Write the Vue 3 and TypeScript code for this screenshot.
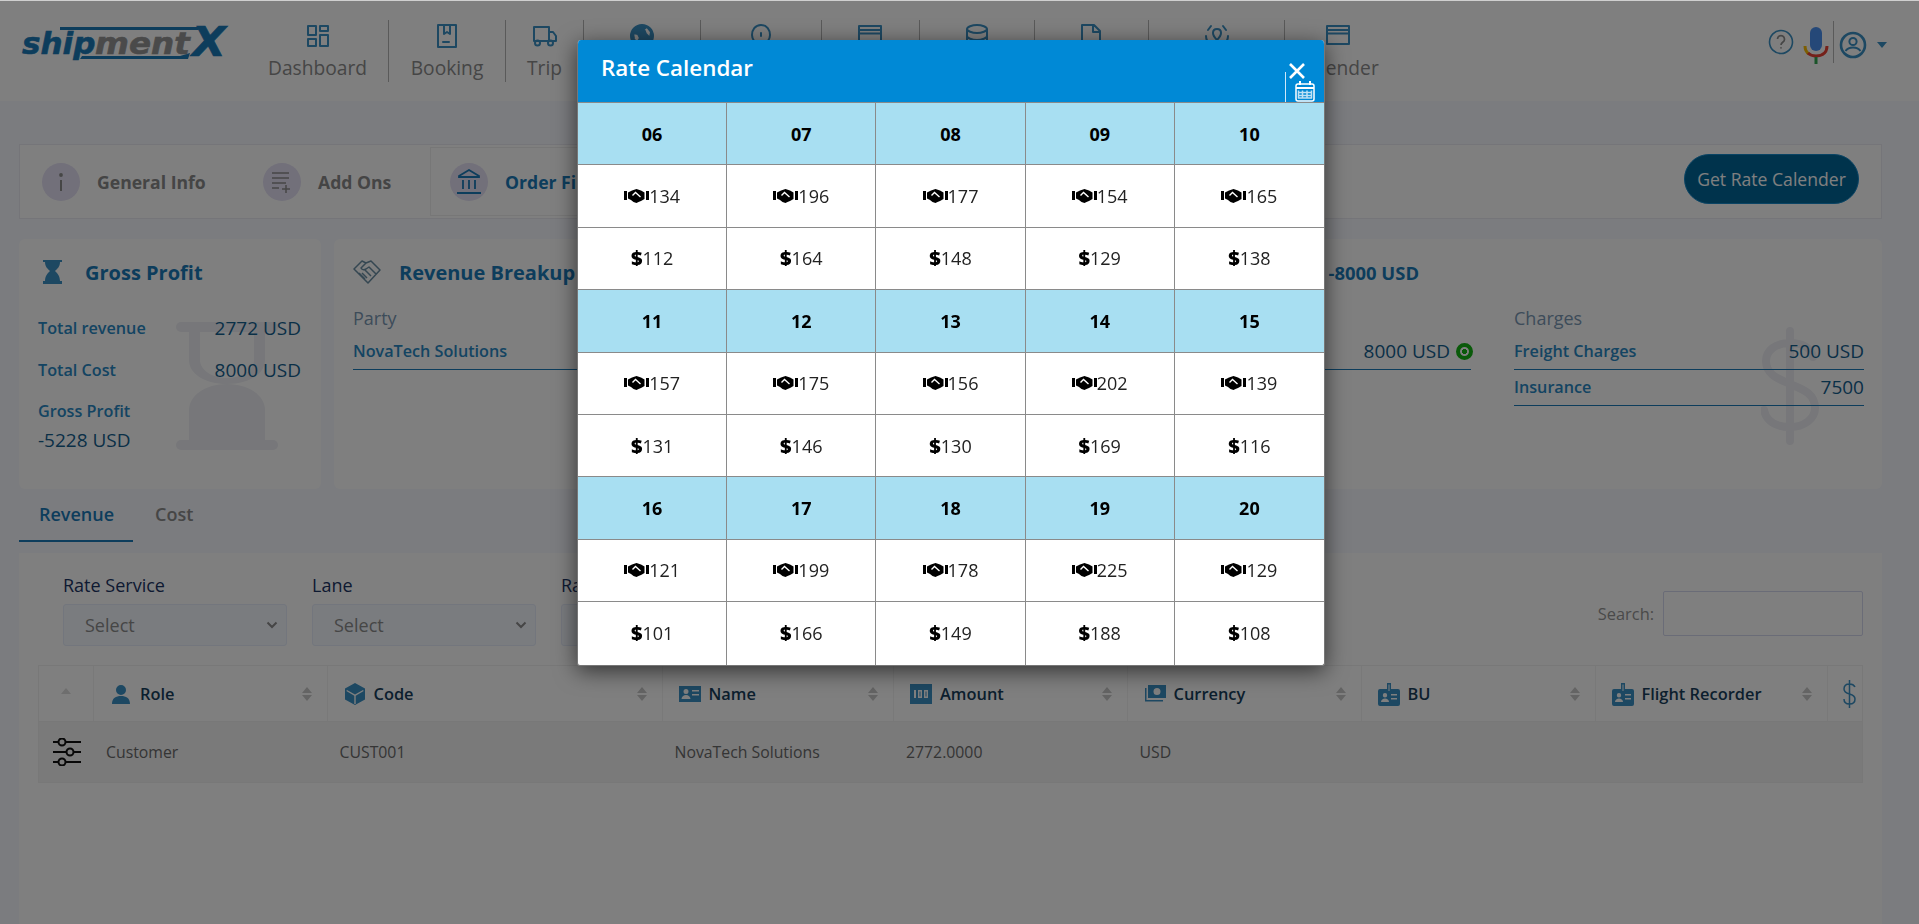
<template>
  <div class="page">
    <header class="topbar">
      <div class="brand">
        <div class="logo">
          <svg class="logo-lines" width="210" height="36" viewBox="0 0 210 36">
            <path d="M40 1H183L178 4H40ZM62 30H160L170 27L168 33H60Z" fill="#1a7ab8" />
          </svg>
          <span class="logo-ship">ship</span><span class="logo-ment">ment</span><span class="logo-x">X</span>
        </div>
      </div>
      <nav class="nav">
        <a v-for="item in navItems" :key="item.icon" class="nav-item" :style="{ width: item.width + 'px' }">
          <svg width="24" height="24" viewBox="0 0 24 24" :fill="item.solid ? '#3a90c4' : 'none'" fill-rule="evenodd" stroke="#3a90c4" stroke-width="2" stroke-linejoin="round" stroke-linecap="round">
            <path :d="item.icon" />
          </svg>
          <span>{{ item.label }}</span>
        </a>
      </nav>
      <div class="top-actions">
        <svg width="26" height="26" viewBox="0 0 26 26" fill="none" stroke="#3a90c4" stroke-width="1.6">
          <circle cx="13" cy="13" r="11.5" />
          <path d="M9.5 10a3.5 3.5 0 1 1 5.5 3c-1.4 1-2 1.4-2 3M13 18.2v1.4" stroke="#8c8c8c" stroke-width="1.7" />
        </svg>
        <svg class="mic" width="26" height="38" viewBox="0 0 26 38">
          <rect x="7" y="0" width="12" height="24" rx="6" fill="#4a90f0" />
          <path d="M2 19c0 4 1 6 4 8" fill="none" stroke="#fbbc05" stroke-width="3" />
          <path d="M5 26c2 2 5 3 8 3s11-1 11-10" fill="none" stroke="#ea4335" stroke-width="3" />
          <rect x="11.5" y="30" width="3" height="7" fill="#34a853" />
        </svg>
        <div class="top-sep"></div>
        <svg class="user-icon" width="28" height="28" viewBox="0 0 28 28" fill="none" stroke="#3a90c4" stroke-width="2.6">
          <circle cx="14" cy="14" r="12" />
          <circle cx="14" cy="10.5" r="3.6" stroke-width="2" />
          <path d="M6.5 20c2-3 5-3.6 7.5-3.6s5.5.6 7.5 3.6" stroke-width="2" />
        </svg>
        <span class="caret"></span>
      </div>
    </header>

    <main class="content">
      <section class="steps">
        <div class="step step-info">
          <span class="step-circle">
            <svg width="6" height="20" viewBox="0 0 6 20"><circle cx="3" cy="3" r="1.9" fill="#8c8c8c" /><rect x="2" y="8" width="2" height="11" fill="#8c8c8c" /></svg>
          </span>
          General Info
        </div>
        <div class="step step-addons">
          <span class="step-circle">
            <svg width="20" height="22" viewBox="0 0 20 22" fill="none" stroke="#8c8c8c" stroke-width="1.5"><path d="M0 2h17M0 7h17M0 12h14M0 17h7M14 14v8M10 18h8" /></svg>
          </span>
          Add Ons
        </div>
        <div class="step step-active">
          <span class="step-circle">
            <svg width="24" height="26" viewBox="0 0 24 26" fill="none" stroke="#1a7ab8" stroke-width="1.8"><path d="M12 1 2 7v1h20V7ZM6 11v9M12 11v9M18 11v9M0 24h24" /></svg>
          </span>
          Order Finance
        </div>
        <button class="rate-btn">Get Rate Calender</button>
      </section>

      <section class="summary">
        <div class="card gross">
          <svg class="watermark-glass" width="102" height="128" viewBox="0 0 102 128" fill="#eeeff4">
            <rect width="102" height="10" rx="5" />
            <rect y="118" width="102" height="10" rx="5" />
            <path d="M13 10v28c0 14 16 24 38 24s38-10 38-24V10H78v28c0 10-12 18-27 18s-27-8-27-18V10Z" />
            <path d="M13 118V88c0-14 16-26 38-26s38 12 38 26v30Z" />
          </svg>
          <div class="card-title">
            <svg class="title-icon-glass" width="19" height="24" viewBox="0 0 19 24" fill="#3a90c4">
              <path d="M0 0h19v2h-2c0 5-3 7-5 9 1 1 5 4 5 10h2v3H0v-3h2c0-6 4-9 5-10-2-2-5-4-5-9H0Z" />
            </svg>
            <h2>Gross Profit</h2>
          </div>
          <div class="gross-row"><span>Total revenue</span><b>2772 USD</b></div>
          <div class="gross-row"><span>Total Cost</span><b>8000 USD</b></div>
          <div class="gross-stack">
            <span>Gross Profit</span>
            <b>-5228 USD</b>
          </div>
        </div>

        <div class="card breakup">
          <svg class="watermark-dollar" width="58" height="118" viewBox="0 0 58 118" fill="none" stroke="#eeeff4" stroke-width="8" stroke-linecap="round">
            <path d="M29 4v110M52 30C50 20 40 16 29 16 14 16 5 24 5 34c0 14 13 18 24 23 12 5 25 9 25 24 0 11-11 19-25 19C15 100 5 94 3 83" />
          </svg>
          <div class="card-title breakup-title">
            <svg class="title-icon" width="28" height="24" viewBox="0 0 28 24" fill="none" stroke="#6a8ea4" stroke-width="1.5" stroke-linejoin="round">
              <path d="M1 9 9 1l4 2 5-2 9 9-12 13Zm12-6L8 8c1 2 3 2 5 1l3-2 7 7M9 13l5 5M12 10l6 6M6 13l6 6" />
            </svg>
            <h2>Revenue Breakup</h2>
            <h2 class="breakup-total">-8000 USD</h2>
          </div>
          <div class="breakup-grid">
            <div>
              <h3>Party</h3>
              <div class="line-row"><span>NovaTech Solutions</span></div>
            </div>
            <div>
              <h3></h3>
              <div class="line-row"><span></span><b>8000 USD <i class="status-dot"></i></b></div>
            </div>
            <div>
              <h3>Charges</h3>
              <div class="line-row"><span>Freight Charges</span><b>500 USD</b></div>
              <div class="line-row"><span>Insurance</span><b>7500</b></div>
            </div>
          </div>
        </div>
      </section>

      <div class="tabs">
        <span class="tab tab-active">Revenue</span>
        <span class="tab">Cost</span>
      </div>

      <section class="panel">
        <div class="filters">
          <div v-for="f in filters" :key="f" class="filter">
            <label>{{ f }}</label>
            <div class="select">
              Select
              <svg width="12" height="8" viewBox="0 0 12 8" fill="none" stroke="#8c8c8c" stroke-width="2"><path d="m1.5 1.5 4.5 4.5 4.5-4.5" /></svg>
            </div>
          </div>
          <div class="search">
            <span>Search:</span>
            <input type="text" aria-label="Search" />
          </div>
        </div>

        <div class="grid-table">
          <div class="th th-first"><span class="sort-up"></span></div>
          <div v-for="col in columns" :key="col.label" class="th">
            <svg class="th-icon" width="24" height="24" viewBox="0 0 24 24" fill="#3a90c4" stroke="none">
              <path :d="col.icon" fill-rule="evenodd" />
            </svg>
            <span>{{ col.label }}</span>
            <span class="sorter"><i></i><i></i></span>
          </div>
          <div class="th th-last">
            <svg width="13" height="30" viewBox="0 0 13 30" fill="none" stroke="#3a90c4" stroke-width="1.5"><path d="M6.5 1v28M12 8c-1-2-3-3-5.5-3C3 5 1 7 1 10c0 3 2 4 5.5 5s5.5 2 5.5 5-2 5-5.5 5S1 24 1 20" /></svg>
          </div>

          <div class="td td-first">
            <svg width="28" height="28" viewBox="0 0 28 28" fill="none" stroke="#111" stroke-width="2">
              <path d="M0 4h5M13 4h15M0 14h13M20 14h8M0 24h5M13 24h15" />
              <circle cx="9" cy="4" r="3.5" /><circle cx="17" cy="14" r="3.5" /><circle cx="9" cy="24" r="3.5" />
            </svg>
          </div>
          <div v-for="(cell, i) in rowCells" :key="i" class="td">{{ cell }}</div>
        </div>
      </section>
    </main>

    <div class="backdrop"></div>

    <div class="modal">
      <div class="modal-head">
        <h1>Rate Calendar</h1>
        <svg class="modal-close" width="18" height="18" viewBox="0 0 18 18" stroke="#fff" stroke-width="2.6"><path d="m2 2 14 14M16 2 2 16" /></svg>
        <span class="modal-sep"></span>
        <svg class="modal-cal" width="20" height="21" viewBox="0 0 20 21" fill="none" stroke="#fff">
          <rect x="1" y="3" width="18" height="17" rx="2" stroke-width="1.5" />
          <path d="M5 0v4M15 0v4" stroke-width="2" />
          <path d="M1 7h18" stroke-width="2" />
          <path d="M3.5 9.5v8M7.5 9.5v8M12 9.5v8M16.5 9.5v8M3 11.5h14M3 14.5h14M3 17h14" stroke-width="1.5" stroke-opacity=".75" />
        </svg>
      </div>
      <div class="calendar">
        <template v-for="week in weeks" :key="week[0].day">
          <div v-for="d in week" :key="'d' + d.day" class="cal-cell cal-day">{{ d.day }}</div>
          <div v-for="d in week" :key="'v' + d.day" class="cal-cell">
            <svg class="deal" width="25" height="14" viewBox="0 0 25 14">
              <path d="M0 2h3v9H0ZM22 2h3v9h-3Z" fill="#000" />
              <path d="M8 1.500 12.500 0 17 1.500 20.500 3.500V10L17 12l-2.500 1-2 1-3-1-2.500-2-3-1.500V3.500Z" fill="#000" />
              <path d="M8.500 6.500 11.500 3.500 16.500 8" fill="none" stroke="#fff" stroke-width="1.400" />
            </svg>{{ d.deals }}
          </div>
          <div v-for="d in week" :key="'p' + d.day" class="cal-cell"><span class="usd">$</span>{{ d.price }}</div>
        </template>
      </div>
    </div>
  </div>
</template>

<script setup lang="ts">
interface DayRate {
  day: string
  deals: number
  price: number
}

// labels under the dialog are not readable in the design, only the icons show
const navItems = [
  { label: 'Dashboard', width: 142, icon: 'M2 2h8v9H2ZM14 2h8v5h-8ZM14 11h8v11h-8ZM2 15h8v7H2Z' },
  { label: 'Booking', width: 117, icon: 'M3 1h18v22H3ZM9 1v9l3-2 3 2V1M8 18h6' },
  { label: 'Trip', width: 78, icon: 'M1 3h15v14H1ZM16 8h4l3 4v5h-7M7 19a2.5 2.5 0 1 1-5 0 2.5 2.5 0 0 1 5 0ZM20 19a2.5 2.5 0 1 1-5 0 2.5 2.5 0 0 1 5 0Z' },
  { label: '', width: 117, solid: true, icon: 'M12 1a11 11 0 1 0 0 22 11 11 0 0 0 0-22ZM3 9l5 1 2 4-3 5-3-4ZM17 3l4 5-1 6-4-4-2-5Z' },
  { label: '', width: 120.6, icon: 'M12 1c6 0 9 5 9 10s-4 9-9 12C7 20 3 16 3 11S6 1 12 1ZM12 9v3' },
  { label: '', width: 98, icon: 'M1 2h22v18H1ZM1 6h22M1 9.5h22' },
  { label: '', width: 115.4, icon: 'M2 5c0-2 5-4 10-4s10 2 10 4-5 4-10 4-10-2-10-4ZM2 5v14c0 2 5 4 10 4s10-2 10-4V5M2 12c0 2 5 4 10 4s10-2 10-4' },
  { label: '', width: 114, icon: 'M3 1h12l6 6v16H3ZM14 1v7h7M8 17h7' },
  { label: '', width: 136.5, icon: 'M12 5c3 0 4 2 4 4s-2 5-4 7c-2-2-4-5-4-7s1-4 4-4ZM6 2 3 6M18 2l3 4M1 12c0 4 2 7 5 9M23 12c0 4-2 7-5 9' },
  { label: 'Calender', width: 106, icon: 'M1 2h22v18H1ZM1 6.1h22M1 9.5h22' },
]

const filters = ['Rate Service', 'Lane', 'Rate Type']

const badge = 'M10 1h4v6h7a2 2 0 0 1 2 2v13a2 2 0 0 1-2 2H3a2 2 0 0 1-2-2V9a2 2 0 0 1 2-2h7Zm1.5 1.5V9h1V2.5ZM8 11a2.2 2.2 0 1 0 0 4.4A2.2 2.2 0 0 0 8 11Zm-4 9h8c0-2-2-3.5-4-3.5S4 18 4 20Zm10-8v1.5h6V12Zm0 4v1.5h6V16Z'

const columns = [
  { label: 'Role', icon: 'M12 3a5 5 0 1 1 0 10 5 5 0 0 1 0-10ZM3 22c0-6 4-8 9-8s9 2 9 8Z' },
  { label: 'Code', icon: 'M12 1 22 6.5v11L12 23 2 17.5v-11ZM4 8l8 4.5L20 8l.7 1-8 4.7V22h-1.4v-8.300l-8-4.700Z' },
  { label: 'Name', icon: 'M1 4h22v16H1ZM8 7a2.5 2.5 0 1 0 0 5 2.5 2.5 0 0 0 0-5ZM3.5 17h9c0-2-2-4-4.5-4s-4.5 2-4.5 4ZM14 8h7v1.5h-7ZM14 12h7v1.5h-7Z' },
  { label: 'Amount', icon: 'M1 2h22v20H1ZM5 8v8h2V8Zm4 0v8h4V8Zm1.5 1.5h1v5h-1ZM15 8v8h4V8Zm1.5 1.5h1v5h-1Z' },
  { label: 'Currency', icon: 'M5 3h18v13H5ZM14 6a3.5 3.5 0 1 0 0 7 3.5 3.5 0 0 0 0-7ZM2 6h1.5v12H20v1.5H2Z' },
  { label: 'BU', icon: badge },
  { label: 'Flight Recorder', icon: badge },
]

const rowCells = ['Customer', 'CUST001', 'NovaTech Solutions', '2772.0000', 'USD', '', '', '']

const deals = [134, 196, 177, 154, 165, 157, 175, 156, 202, 139, 121, 199, 178, 225, 129]
const prices = [112, 164, 148, 129, 138, 131, 146, 130, 169, 116, 101, 166, 149, 188, 108]

const days: DayRate[] = deals.map((d, i) => ({
  day: String(i + 6).padStart(2, '0'),
  deals: d,
  price: prices[i],
}))

const weeks: DayRate[][] = [days.slice(0, 5), days.slice(5, 10), days.slice(10, 15)]
</script>

<style>
html,
body {
  margin: 0;
  background: #f6f8ff;
}
</style>

<style scoped>
.page {
  position: relative;
  height: 924px;
  overflow: hidden;
  background: #f6f8ff;
  font-family: "Open Sans", "Noto Sans", sans-serif;
  font-size: 16px;
  color: #747474;
}

.topbar {
  display: flex;
  align-items: flex-start;
  height: 100px;
  background: #fff;
  border-top: 1px solid #cfcfcf;
}

.brand {
  width: 247px;
  flex: none;
  padding: 25px 0 0 20px;
  box-sizing: border-box;
}

.logo {
  position: relative;
  width: 207px;
  height: 34px;
  font-family: "DejaVu Sans", sans-serif;
  font-weight: 700;
  font-style: italic;
  font-size: 31px;
  line-height: 34px;
  white-space: nowrap;
  -webkit-text-stroke: 0.6px currentColor;
}

.logo-lines {
  position: absolute;
  left: 0;
  top: 0;
}

.logo-ship,
.logo-ment,
.logo-x {
  position: absolute;
  top: 0;
  transform-origin: left center;
}

.logo-ship {
  left: 2px;
  color: #1a7ab8;
}

.logo-ment {
  left: 75px;
  color: #949494;
  transform: scaleX(1.05);
}

.logo-x {
  left: 172px;
  top: -1px;
  font-size: 40px;
  color: #1a7ab8;
  transform: scaleX(1.1);
}

.nav {
  display: flex;
  margin-top: 19px;
}

.nav-item {
  display: flex;
  flex-direction: column;
  align-items: center;
  height: 62px;
  padding-top: 4px;
  box-sizing: border-box;
  border-right: 1px solid #b4b4b4;
  font-size: 19.2px;
  color: #8c8c8c;
}

.nav-item:last-child {
  border-right: 0;
}

.nav-item span {
  margin-top: 7px;
  line-height: 26px;
  white-space: nowrap;
}

.top-actions {
  display: flex;
  align-items: center;
  margin: 19px 0 0 auto;
  height: 44px;
  padding-right: 32px;
}

.mic {
  margin: 8px 4px 0 9px;
}

.top-sep {
  width: 1px;
  height: 42px;
  margin-right: 5px;
  background: #b4b4b4;
}

.user-icon {
  margin-top: 6px;
}

.caret {
  width: 0;
  height: 0;
  margin: 6px 0 0 10px;
  border: 5px solid transparent;
  border-top: 6px solid #3a90c4;
  border-bottom: 0;
}

.content {
  padding: 43px 37px 0 19px;
}

.steps {
  display: flex;
  align-items: center;
  height: 75px;
  padding-left: 3px;
  box-sizing: border-box;
  background: #fff;
  border: 1px solid #eaeaf2;
}

.step {
  display: flex;
  align-items: center;
  gap: 17px;
  height: 69px;
  padding: 0 19px;
  box-sizing: border-box;
  font-size: 17.6px;
  font-weight: 700;
  color: #8a8a8a;
}

.step-info {
  width: 221px;
}

.step-addons {
  width: 186px;
}

.step-active {
  width: 350px;
  color: #1a7ab8;
  border: 1px solid #eeeeee;
}

.step-circle {
  display: flex;
  align-items: center;
  justify-content: center;
  width: 38px;
  height: 38px;
  flex: none;
  border-radius: 50%;
  background: #e4e0f4;
}

.rate-btn {
  width: 175px;
  height: 50px;
  margin: 0 22px 5px auto;
  padding: 0;
  border: 1px solid #1488c8;
  border-radius: 25px;
  background: #006699;
  color: #fff;
  font: 17.6px "Open Sans", sans-serif;
}

.summary {
  display: flex;
  gap: 13px;
  margin-top: 20px;
  height: 250px;
}

.card {
  position: relative;
  overflow: hidden;
  padding: 20px 20px 0 19px;
  box-sizing: border-box;
  background: #fff;
  border-radius: 6px;
}

.gross {
  width: 302px;
  flex: none;
}

.breakup {
  flex: 1;
  padding-right: 18px;
}

.watermark-glass {
  position: absolute;
  left: 157px;
  top: 83px;
}

.watermark-dollar {
  position: absolute;
  left: 1427px;
  top: 88px;
}

.card-title {
  display: flex;
  align-items: center;
  height: 26px;
  margin-bottom: 22px;
  gap: 23px;
}

.title-icon-glass {
  margin-left: 5px;
}

.breakup-title {
  gap: 18px;
  margin-bottom: 22px;
}

h2 {
  margin: 0;
  font-size: 20px;
  font-weight: 700;
  color: #1a7ab8;
  white-space: nowrap;
}

.breakup-total {
  margin-left: auto;
  margin-right: 445px;
  font-size: 18.4px;
}

.gross-row {
  position: relative;
  display: flex;
  justify-content: space-between;
  align-items: center;
  height: 42px;
  font-size: 16.2px;
  font-weight: 600;
  color: #2888c4;
}

.gross-row b,
.gross-stack b,
.line-row b {
  font-size: 19px;
  font-weight: 500;
  color: #14608f;
}

.gross-stack {
  position: relative;
  display: flex;
  flex-direction: column;
  margin-top: 6px;
  font-size: 16.2px;
  font-weight: 600;
  color: #2888c4;
  line-height: 29px;
}

.breakup-grid {
  position: relative;
  display: grid;
  grid-template-columns: 725px 350px 350px;
  column-gap: 43px;
  margin-right: -1px;
}

h3 {
  min-height: 28px;
  margin: -3px 0 2px;
  font-size: 18px;
  font-weight: 500;
  line-height: 28px;
  color: #7a98b4;
}

.line-row {
  display: flex;
  justify-content: space-between;
  align-items: center;
  height: 36px;
  padding-bottom: 1px;
  box-sizing: border-box;
  font-size: 16.2px;
  font-weight: 600;
  color: #2888c4;
  border-bottom: 1px solid #1a7ab8;
}

.line-row b {
  display: flex;
  align-items: center;
  gap: 6px;
}

.status-dot {
  width: 9px;
  height: 9px;
  border: 4px solid #14b414;
  border-radius: 50%;
  background: radial-gradient(circle, #14b414 38%, #fff 42%);
  margin-right: -2px;
}

.tabs {
  display: flex;
  height: 53px;
}

.tab {
  padding: 13px 22px 0;
  box-sizing: border-box;
  height: 53px;
  font-size: 18px;
  font-weight: 600;
  color: #8c8c8c;
}

.tab-active {
  width: 114px;
  padding-left: 20px;
  color: #1a7ab8;
  border-bottom: 2px solid #1a7ab8;
}

.panel {
  margin-top: 11px;
  height: 400px;
  padding: 21px 19px 0;
  background: #fff;
}

.filters {
  position: relative;
  display: flex;
  gap: 25px;
  margin-left: 25px;
  height: 91px;
}

.filter {
  width: 224px;
}

.filter label {
  display: block;
  height: 30px;
  font-size: 18px;
  font-weight: 500;
  line-height: 22px;
  color: #1c3464;
}

.select {
  display: flex;
  align-items: center;
  justify-content: space-between;
  height: 42px;
  padding: 0 8px 0 21px;
  box-sizing: border-box;
  background: #f4f8ff;
  border: 1px solid #e6ecfa;
  border-radius: 3px;
  font-size: 18px;
  color: #8c8c8c;
}

.search {
  display: flex;
  align-items: center;
  gap: 9px;
  margin: 17px 0 0 auto;
  height: 45px;
  font-size: 16.4px;
  color: #949494;
}

.search input {
  width: 200px;
  height: 45px;
  padding: 0;
  box-sizing: border-box;
  background: #fff;
  border: 1px solid #d4d8ee;
  border-radius: 2px;
}

.grid-table {
  display: grid;
  grid-template-columns: 55px 233.5px 335px 231.5px 233.5px 234px 234px 232.5px 36px;
  overflow: hidden;
  border: 1px solid #f0f0f0;
}

.th {
  display: flex;
  align-items: center;
  gap: 7px;
  height: 55px;
  padding: 0 15px;
  box-sizing: border-box;
  border-right: 1px solid #f2f2f2;
  font-size: 16.4px;
  font-weight: 600;
  color: #183f5c;
  white-space: nowrap;
}

.th svg {
  flex: none;
}

.th-first {
  justify-content: center;
  padding: 0 0 6px;
}

.th-last {
  padding: 0 0 0 15px;
  border-right: 0;
}

.sort-up {
  width: 0;
  height: 0;
  border: 5px solid transparent;
  border-top: 0;
  border-bottom: 6px solid #dcdcdc;
}

.sorter {
  display: flex;
  flex-direction: column;
  gap: 2px;
  margin-left: auto;
}

.sorter i {
  width: 0;
  height: 0;
  border-left: 5px solid transparent;
  border-right: 5px solid transparent;
  border-bottom: 6px solid #c8c8c8;
}

.sorter i:last-child {
  border-bottom: 0;
  border-top: 6px solid #c8c8c8;
}

.td {
  display: flex;
  align-items: center;
  height: 61px;
  padding-left: 12px;
  box-sizing: border-box;
  background: #f4f4f4;
  border-top: 1px solid #f0f0f0;
  font-size: 15.8px;
  color: #6a6a6a;
  white-space: nowrap;
}

.td-first {
  padding-left: 14px;
}

.backdrop {
  position: fixed;
  inset: 1px 0 0;
  background: rgba(0, 0, 0, 0.5);
}

.modal {
  position: absolute;
  left: 577px;
  top: 40px;
  width: 746px;
  overflow: hidden;
  background: #fff;
  border: 1px solid #777;
  border-top: 0;
  border-radius: 4px 4px 3px 3px;
  box-shadow: 0 5px 22px rgba(0, 0, 0, 0.6);
}

.modal-head {
  position: relative;
  height: 62px;
  margin: 0 -1px;
  padding-left: 24px;
  background: #0089d6;
  color: #fff;
}

.modal-head h1 {
  margin: 0;
  font-size: 22.4px;
  font-weight: 600;
  line-height: 56px;
}

.modal-close {
  position: absolute;
  right: 19px;
  top: 22px;
}

.modal-sep {
  position: absolute;
  left: 708px;
  top: 32px;
  width: 1px;
  height: 30px;
  background: #cfe8f8;
}

.modal-cal {
  position: absolute;
  right: 10px;
  top: 41px;
}

.calendar {
  display: grid;
  grid-template-columns: repeat(5, 1fr);
  grid-auto-rows: 62.4px;
  border-top: 1px solid #8a8a8a;
}

.cal-cell {
  display: flex;
  align-items: center;
  justify-content: center;
  box-sizing: border-box;
  border-right: 1px solid #8a8a8a;
  border-bottom: 1px solid #8a8a8a;
  font-size: 18px;
  color: #222;
}

.cal-cell:nth-child(5n) {
  border-right: 0;
}

.cal-cell:nth-last-child(-n + 5) {
  border-bottom: 0;
}

.cal-day {
  background: #a8dff2;
  font-weight: 700;
  color: #000;
}

.deal {
  flex: none;
}

.usd {
  font-size: 20px;
  font-weight: 800;
  color: #000;
  line-height: 1;
}
</style>
